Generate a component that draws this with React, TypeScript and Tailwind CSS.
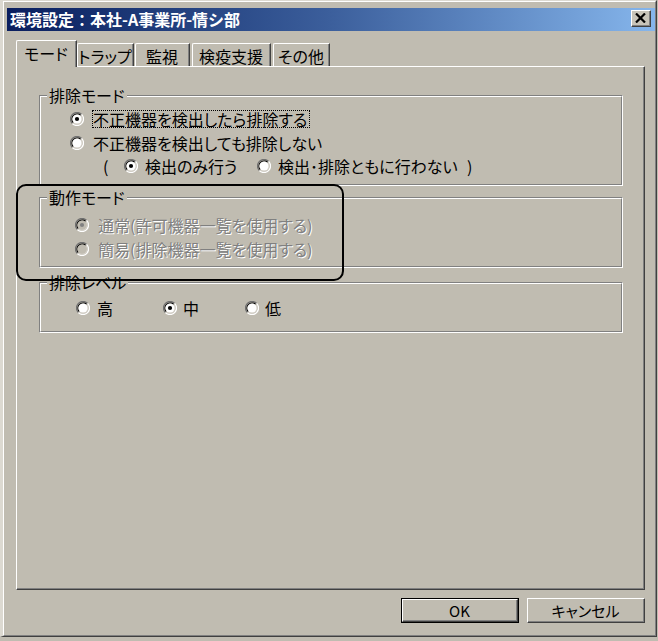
import React from "react";

const FONT = "font-['Noto_Sans_CJK_JP','Noto_Sans_CJK_SC',sans-serif] [font-feature-settings:'palt']";

function Radio({ checked = false, disabled = false }: { checked?: boolean; disabled?: boolean }) {
  return (
    <svg width="14" height="14" viewBox="0 0 14 14" className="shrink-0 block">
      <path d="M2.4 11.6 A6.5 6.5 0 0 1 11.6 2.4" fill="none" stroke="#707070" strokeWidth="1.3" />
      <path d="M11.6 2.4 A6.5 6.5 0 0 1 2.4 11.6" fill="none" stroke="#ffffff" strokeWidth="1.3" />
      <path d="M3.33 10.67 A5.2 5.2 0 0 1 10.67 3.33" fill="none" stroke="#000000" strokeWidth="1.2" />
      <path d="M10.67 3.33 A5.2 5.2 0 0 1 3.33 10.67" fill="none" stroke="#d4d0c8" strokeWidth="1.2" />
      <circle cx="7" cy="7" r="4.6" fill={disabled ? "#c0bcb1" : "#ffffff"} />
      {checked && <circle cx="7" cy="7" r="2.1" fill={disabled ? "#808080" : "#000000"} />}
    </svg>
  );
}

function Tab({ label, selected = false, w, ml = 0 }: { label: string; selected?: boolean; w: number; ml?: number }) {
  if (selected) {
    return (
      <div
        className="relative z-10 h-[27px] -mb-px bg-[#c0bcb1] border-t border-l border-r border-t-white border-l-white border-r-[#404040] rounded-tl-[2px]"
        style={{ width: w, marginLeft: ml }}
      >
        <div className="h-full border-r border-r-[#808080] flex justify-center pt-[4px] text-[16px] leading-[16px] text-black">
          {label}
        </div>
      </div>
    );
  }
  return (
    <div
      className="h-[23px] border-t border-l border-r border-t-white border-l-white border-r-[#404040] rounded-tl-[2px]"
      style={{ width: w, marginLeft: ml }}
    >
      <div className="h-full border-r border-r-[#808080] flex justify-center pt-[4px] text-[16px] leading-[16px] text-black">
        {label}
      </div>
    </div>
  );
}

function Group({ legend, h, mt, children }: { legend: string; h: number; mt: number; children: React.ReactNode }) {
  return (
    <div
      className="relative ml-[22px] w-[584px] border border-t-[#808080] border-l-[#808080] border-r-white border-b-white"
      style={{ height: h, marginTop: mt }}
    >
      <div className="h-full border border-t-white border-l-white border-r-[#808080] border-b-[#808080]">{children}</div>
      <div className="absolute left-[7px] top-[-9px] px-[2px] bg-[#c0bcb1] text-[16px] leading-[16px] text-black">
        {legend}
      </div>
    </div>
  );
}

function Button({ label, def = false }: { label: string; def?: boolean }) {
  const inner = (
    <div className="h-full border border-t-white border-l-white border-r-[#404040] border-b-[#404040]">
      <div className="h-full border-r border-b border-r-[#808080] border-b-[#808080] flex items-center justify-center text-[15px] leading-[15px] text-black">
        {label}
      </div>
    </div>
  );
  return (
    <div className={`w-[118px] h-[25px] ${def ? "border border-black" : ""}`}>{inner}</div>
  );
}

export default function App() {
  const dis = "text-[#808080] [text-shadow:1px_1px_0_#ffffff]";
  return (
    <div className={`w-[658px] h-[641px] overflow-hidden bg-[#c0bcb1] relative ${FONT}`}>
      <div className="w-[657px] h-[637px] flex flex-col border-t border-l-[3px] border-r border-b border-t-[#dcd9d1] border-l-[#dcd9d1] border-r-[#404040] border-b-[#404040]">
        <div className="flex-1 flex flex-col border border-t-white border-l-white border-r-[#808080] border-b-[#808080] pt-[6px] pl-[3px]">
          {/* title bar */}
          <div className="h-[23px] flex items-start justify-between bg-linear-to-r from-[#0a1e5e] via-[#3c5f9c] to-[#86b6ec]">
            <div className="pl-[3px] text-white font-bold text-[16px] leading-[23px] whitespace-nowrap [font-feature-settings:normal]">
              環境設定：本社-A事業所-情シ部
            </div>
            <div className="mt-[2px] mr-[4px] w-[20px] h-[17px] bg-[#c8c4b9] border border-t-white border-l-white border-r-[#404040] border-b-[#404040]">
              <div className="h-full border-r border-b border-r-[#808080] border-b-[#808080] flex items-center justify-center">
                <svg width="11" height="10" viewBox="0 0 11 10">
                  <path d="M1 0.5 L10 9.5 M10 0.5 L1 9.5" stroke="#000" strokeWidth="2.2" />
                </svg>
              </div>
            </div>
          </div>

          {/* tabs */}
          <div className="mt-[9px] ml-[9px] flex items-end">
            <Tab label="モード" selected w={61} />
            <Tab label="トラップ" w={57} />
            <Tab label="監視" w={55} ml={1} />
            <Tab label="検疫支援" w={79} ml={2} />
            <Tab label="その他" w={57} ml={2} />
          </div>

          {/* panel */}
          <div className="ml-[9px] w-[629px] h-[524px] border border-t-white border-l-white border-r-[#404040] border-b-[#404040]">
            <div className="h-full border-r border-b border-r-[#808080] border-b-[#808080] flex flex-col text-black">
              <Group legend="排除モード" h={91} mt={28}>
                <div className="pt-[10px] flex flex-col text-[16px] leading-[16px]">
                  <div className="h-[24px] flex items-center pl-[29px]">
                    <Radio checked />
                    <span className="ml-[8px] border border-dotted border-black pr-[2px]">不正機器を検出したら排除する</span>
                  </div>
                  <div className="h-[23px] flex items-center pl-[29px]">
                    <Radio />
                    <span className="ml-[8px] border border-transparent">不正機器を検出しても排除しない</span>
                  </div>
                  <div className="h-[24px] flex items-center pl-[62px]">
                    <span className="w-[21px]">(</span>
                    <Radio checked />
                    <span className="ml-[7px] w-[112px]">検出のみ行う</span>
                    <Radio />
                    <span className="ml-[7px] w-[189px]">検出･排除ともに行わない</span>
                    <span>)</span>
                  </div>
                </div>
              </Group>

              <Group legend="動作モード" h={71} mt={11}>
                <div className="pt-[14px] flex flex-col text-[16px] leading-[16px]">
                  <div className="h-[24px] flex items-center pl-[34px]">
                    <Radio checked disabled />
                    <span className={`ml-[9px] ${dis}`}>通常(許可機器一覧を使用する)</span>
                  </div>
                  <div className="h-[24px] flex items-center pl-[34px]">
                    <Radio disabled />
                    <span className={`ml-[9px] ${dis}`}>簡易(排除機器一覧を使用する)</span>
                  </div>
                </div>
              </Group>

              <Group legend="排除レベル" h={51} mt={14}>
                <div className="pt-[12px] flex text-[16px] leading-[16px]">
                  <div className="h-[24px] flex items-center pl-[35px]">
                    <div className="w-[87px] flex items-center">
                      <Radio />
                      <span className="ml-[7px]">高</span>
                    </div>
                    <div className="w-[82px] flex items-center">
                      <Radio checked />
                      <span className="ml-[6px]">中</span>
                    </div>
                    <div className="flex items-center">
                      <Radio />
                      <span className="ml-[6px]">低</span>
                    </div>
                  </div>
                </div>
              </Group>
            </div>
          </div>

          {/* buttons */}
          <div className="mt-[8px] flex justify-end gap-[8px] pr-[10px]">
            <Button label="OK" def />
            <Button label="キャンセル" />
          </div>
        </div>
      </div>

      {/* annotation */}
      <div className="absolute left-[16px] top-[184px] w-[328px] h-[97px] border-2 border-black rounded-[10px] z-20 pointer-events-none" />
    </div>
  );
}
